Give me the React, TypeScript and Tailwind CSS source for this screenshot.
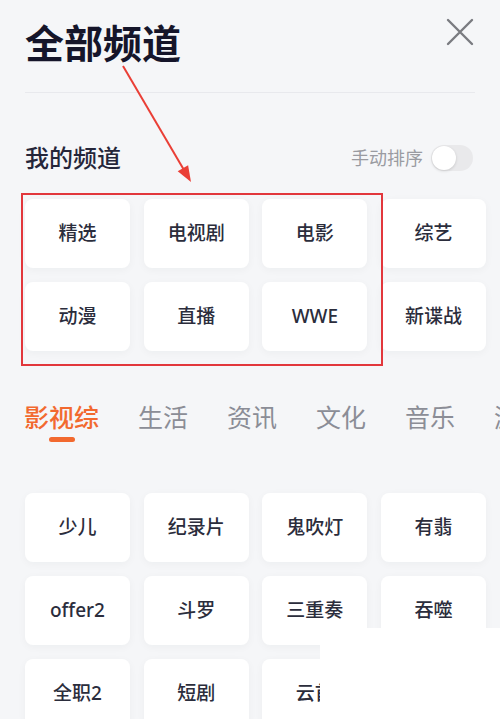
import React from "react";

const font = { fontFamily: '"Noto Sans", "Noto Sans CJK SC", sans-serif' };

const mine = ["精选", "电视剧", "电影", "综艺", "动漫", "直播", "WWE", "新谍战"];
const more = ["少儿", "纪录片", "鬼吹灯", "有翡", "offer2", "斗罗", "三重奏", "吞噬", "全职2", "短剧", "云首", ""];
const tabs = ["影视综", "生活", "资讯", "文化", "音乐", "游戏"];

function Tile({ label }: { label: string }) {
  return (
    <div className="flex h-[69px] items-center justify-center rounded-[8px] bg-white text-[19px] font-medium text-[#2b2d3c] shadow-[0_2px_8px_rgba(30,40,60,0.04)]">
      {label}
    </div>
  );
}

export default function App() {
  return (
    <div className="relative h-[719px] w-[500px] overflow-hidden bg-[#f5f6f8]" style={font}>
      <div className="flex items-start justify-between pl-[25px] pr-[26px] pt-[18px]">
        <h1 className="text-[39px] font-bold leading-[50px] text-[#15152a]">全部频道</h1>
        <svg width="28" height="28" viewBox="0 0 28 28">
          <path d="M2 2 L26 26 M26 2 L2 26" stroke="#7a7b80" strokeWidth="2.4" strokeLinecap="round" />
        </svg>
      </div>
      <div className="mx-[25px] mt-[24px] h-px bg-[#e8e9ed]" />
      <div className="mt-[48px] flex h-[34px] items-center justify-between pl-[25px] pr-[27px]">
        <span className="text-[24px] font-medium text-[#25263a]">我的频道</span>
        <div className="flex items-center gap-[8px]">
          <span className="text-[18px] text-[#9a9ba1]">手动排序</span>
          <div className="flex h-[26px] w-[42px] items-center rounded-full bg-[#e9e9eb] pl-[1px]">
            <div className="h-[24px] w-[24px] rounded-full bg-white shadow-[0_1px_3px_rgba(0,0,0,0.15)]" />
          </div>
        </div>
      </div>
      <div className="mt-[24px] grid grid-cols-[repeat(4,105px)] gap-x-[13.7px] gap-y-[14px] pl-[25px]">
        {mine.map((m) => (
          <Tile key={m} label={m} />
        ))}
      </div>
      <div className="mt-[50px] flex gap-[39px] whitespace-nowrap pl-[24px]">
        {tabs.map((t, i) => (
          <div key={t} className="flex flex-col items-center">
            <span className={`text-[25px] leading-[32px] ${i === 0 ? "font-medium text-[#f2692f]" : "text-[#8b8d96]"}`}>{t}</span>
            {i === 0 ? <div className="mt-[4px] h-[5px] w-[26px] rounded-full bg-[#f2692f]" /> : <div className="mt-[4px] h-[5px]" />}
          </div>
        ))}
      </div>
      <div className="mt-[51px] grid grid-cols-[repeat(4,105px)] gap-x-[13.7px] gap-y-[14px] pl-[25px]">
        {more.map((m, i) => (
          <Tile key={i} label={m} />
        ))}
      </div>

      <div className="absolute left-[21px] top-[193px] h-[173px] w-[362px] border-2 border-[#e2373c]" />
      <svg className="absolute left-0 top-0" width="500" height="719" viewBox="0 0 500 719">
        <line x1="123" y1="66" x2="184" y2="170" stroke="#ea3f36" strokeWidth="2" />
        <polygon points="191,182 188.1,165.2 177.7,171.2" fill="#ea3f36" />
      </svg>
      <div className="absolute bottom-0 left-[320px] right-0 top-[628px] bg-white" />
    </div>
  );
}
